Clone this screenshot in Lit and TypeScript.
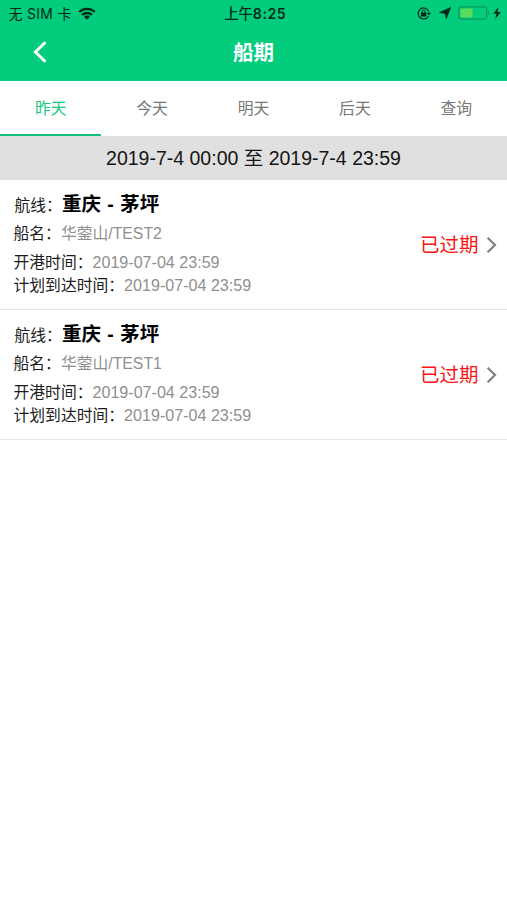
import { LitElement, html, css } from "lit";
import { customElement, state } from "lit/decorators.js";
import { classMap } from "lit/directives/class-map.js";

interface Voyage {
  route: string;
  ship: string;
  open: string;
  arrive: string;
  status: string;
}

@customElement("status-bar")
class StatusBar extends LitElement {
  static styles = css`
    :host {
      display: grid;
      grid-template-columns: 1fr auto 1fr;
      align-items: center;
      height: 28px;
      padding: 0 6px 0 8.5px;
      box-sizing: border-box;
      color: #04291a;
      font-size: 14px;
      line-height: 28px;
    }
    .left, .right { display: flex; align-items: center; }
    .carrier { letter-spacing: 0.35px; white-space: pre; }
    .wifi { margin: 0 0 2px 6.5px; }
    .time { font-weight: 500; font-size: 14.3px; height: 28px; padding-left: 1px; }
    .clock { font-family: Inter, "Liberation Sans", sans-serif; font-weight: 600; font-size: 14.2px; letter-spacing: 0.5px; }
    .carrier span { font-family: Inter, "Liberation Sans", sans-serif; font-size: 13.8px; }
    .right { justify-content: flex-end; margin-bottom: 2px; }
    .arrow { margin-left: 8px; }
    .battery { margin-left: 7px; }
    .bolt { margin-left: 3px; }
    svg { display: block; flex: none; }
  `;
  render() {
    return html`
      <div class="left">
        <span class="carrier">无 <span>SIM</span> 卡</span>
        <svg class="wifi" width="18" height="13" viewBox="0 0 18 13" fill="none" stroke="#04291a" stroke-width="2.3">
          <path d="M1.2 5 A11.2 11.2 0 0 1 16.8 5" />
          <path d="M4.1 8 A7 7 0 0 1 13.9 8" />
          <path d="M6.2 9.9 A4 4 0 0 1 11.8 9.9 L9 12.8 Z" fill="#04291a" stroke="none" />
        </svg>
      </div>
      <div class="time">上午<span class="clock">8:25</span></div>
      <div class="right">
        <svg width="14" height="13" viewBox="0 0 14 13" fill="none" stroke="#04291a">
          <path d="M11.7 4.4 A5.5 5.5 0 1 0 11.4 9.2" stroke-width="1.2" />
          <path d="M9.9 5.8 H13.9 L11.9 8.6 Z" fill="#04291a" stroke="none" />
          <rect x="3.9" y="5.6" width="5.4" height="3.9" rx=".5" fill="#04291a" stroke="none" />
          <path d="M5 6 V4.8 a1.6 1.6 0 0 1 3.2 0 V6" stroke-width="1" />
        </svg>
        <svg class="arrow" width="12" height="12" viewBox="0 0 12 12" fill="#04291a">
          <path d="M11.9 .2 L7.3 11.9 L6 6.6 L.2 5.6 Z" stroke="#04291a" stroke-width=".4" stroke-linejoin="round" />
        </svg>
        <svg class="battery" width="32" height="14" viewBox="0 0 32 14">
          <rect x=".8" y=".8" width="28" height="12.4" rx="3" fill="none" stroke="#05995f" stroke-width="1.2" />
          <rect x="2.4" y="2.4" width="12.2" height="9.2" rx="1.2" fill="#58dc5d" />
          <path d="M30 5 a2.2 2.2 0 0 1 0 4 Z" fill="#05995f" />
        </svg>
        <svg class="bolt" width="8" height="12" viewBox="0 0 8 12" fill="#04291a">
          <path d="M5.6 0 L.3 6.7 H3.4 L2.3 12 L7.8 5 H4.6 Z" />
        </svg>
      </div>
    `;
  }
}

@customElement("voyage-row")
class VoyageRow extends LitElement {
  static properties = { voyage: { attribute: false } };
  declare voyage: Voyage;

  static styles = css`
    :host {
      display: flex;
      align-items: center;
      justify-content: space-between;
      box-sizing: border-box;
      height: 130px;
      padding: 0 10px 0 13.5px;
      border-bottom: 1px solid #e4e4e4;
    }
    .info { display: flex; flex-direction: column; height: 119px; }
    .line { display: flex; align-items: center; height: 23px; white-space: nowrap; }
    .label { font-size: 15.8px; color: #1c1c1c; }
    .value { font-size: 16.1px; color: #8f8f8f; padding-top: 1px; }
    .ship { font-size: 15.8px; color: #8f8f8f; }
    .line.head { height: 26px; margin: 5px 0; }
    .head .label { padding: 2px 0 0 1px; }
    .head .route { font-size: 19.5px; font-weight: 700; color: #000; word-spacing: 1px; margin-top: -1px; }
    .gap { margin-bottom: 6px; }
    .state { display: flex; align-items: center; gap: 7.5px; color: #fa1414; font-size: 19.5px; }
    .state span { margin-top: -2px; }
    svg { display: block; }
  `;
  render() {
    const v = this.voyage;
    return html`
      <div class="info">
        <div class="line head"><span class="label">航线：</span><span class="route">${v.route}</span></div>
        <div class="line gap"><span class="label">船名：</span><span class="ship">${v.ship}</span></div>
        <div class="line"><span class="label">开港时间：</span><span class="value">${v.open}</span></div>
        <div class="line"><span class="label">计划到达时间：</span><span class="value">${v.arrive}</span></div>
      </div>
      <div class="state">
        <span>${v.status}</span>
        <svg width="11" height="18" viewBox="0 0 11 18" fill="none" stroke="#808080" stroke-width="2.2">
          <path d="M1.6 1.8 L9 9 L1.6 16.2" />
        </svg>
      </div>
    `;
  }
}

@customElement("app-root")
class AppRoot extends LitElement {
  @state() private active = 0;

  private tabs = ["昨天", "今天", "明天", "后天", "查询"];

  private voyages: Voyage[] = [
    { route: "重庆 - 茅坪", ship: "华蓥山/TEST2", open: "2019-07-04 23:59", arrive: "2019-07-04 23:59", status: "已过期" },
    { route: "重庆 - 茅坪", ship: "华蓥山/TEST1", open: "2019-07-04 23:59", arrive: "2019-07-04 23:59", status: "已过期" },
  ];

  static styles = css`
    :host {
      display: block;
      min-height: 900px;
      background: #fff;
      font-family: "Liberation Sans", "Noto Sans CJK SC", sans-serif;
    }
    .top { background: #03cd7c; height: 80.5px; }
    .nav {
      display: grid;
      grid-template-columns: 60px 1fr 60px;
      align-items: center;
      height: 48px;
      color: #fff;
    }
    .back { display: block; margin-left: 32px; }
    .title { text-align: center; font-size: 20.5px; font-weight: 600; margin-top: -2px; }
    .tabs { display: grid; grid-template-columns: repeat(5, 1fr); height: 55.5px; }
    .tab {
      display: flex;
      align-items: center;
      justify-content: center;
      box-sizing: border-box;
      border-bottom: 2.5px solid transparent;
      font-size: 15.8px;
      color: #777;
    }
    .tab.on { color: #12cb80; border-bottom-color: #12c07e; }
    .range {
      height: 44px;
      line-height: 44px;
      background: #e0e0e0;
      text-align: center;
      font-size: 19.5px;
      color: #151515;
      white-space: nowrap;
    }
  `;

  render() {
    return html`
      <div class="top">
        <status-bar></status-bar>
        <div class="nav">
          <svg class="back" width="16" height="24" viewBox="0 0 16 24" fill="none" stroke="#fff" stroke-width="3">
            <path d="M13.4 2.2 L3.4 12 L13.4 21.8" />
          </svg>
          <div class="title">船期</div>
        </div>
      </div>
      <div class="tabs">
        ${this.tabs.map(
          (t, i) => html`<div class=${classMap({ tab: true, on: i === this.active })} @click=${() => (this.active = i)}>${t}</div>`
        )}
      </div>
      <div class="range">2019-7-4 00:00 至 2019-7-4 23:59</div>
      ${this.voyages.map((v) => html`<voyage-row .voyage=${v}></voyage-row>`)}
    `;
  }
}
